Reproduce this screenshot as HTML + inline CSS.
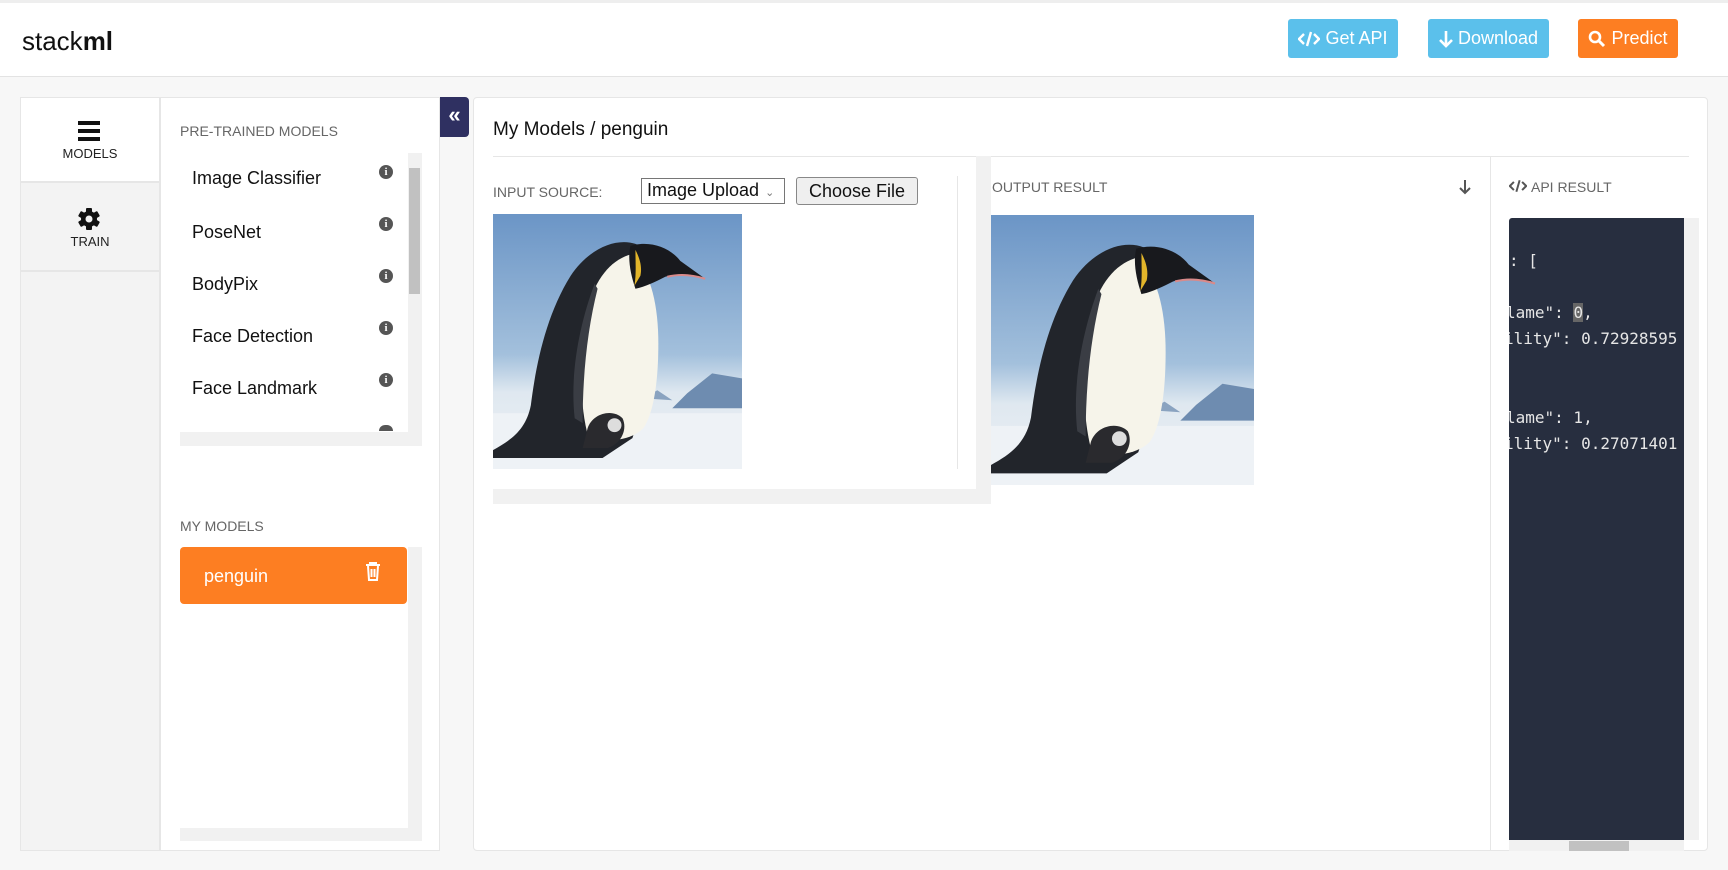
<!DOCTYPE html>
<html><head><meta charset="utf-8"><style>
*{box-sizing:border-box;margin:0;padding:0}
body{width:1728px;height:870px;background:#f7f7f7;font-family:"Liberation Sans",Arial,sans-serif;position:relative;overflow:hidden;color:#222}
.a{position:absolute}
.hdr{left:0;top:0;width:1728px;height:77px;background:#fff;border-top:3px solid #eee;border-bottom:1px solid #e3e3e3}
.btn{height:39px;top:19px;border-radius:3px;color:#fff;font-size:18px;display:flex;align-items:center;justify-content:center;gap:5px}
.lbl{font-size:14px;color:#666}
.item{left:192px;font-size:18px;color:#111}
.info{left:379px;width:14px;height:14px;border-radius:50%;background:#555;color:#fff;font-size:11px;font-weight:bold;text-align:center;line-height:14px;font-family:"Liberation Serif",serif}
.sb{background:#f1f1f1}
.code{font-family:"DejaVu Sans Mono","Liberation Mono",monospace;font-size:16px;color:#e6e6e6;white-space:pre}
</style></head><body>
<div class="a hdr"></div>
<div class="a" style="left:22px;top:26px;font-size:26px;color:#111">stack<b>ml</b></div>
<div class="a btn" style="left:1288px;width:110px;background:#5bc0eb">
<svg width="22" height="16" viewBox="0 0 22 16"><path d="M6 3L1 8l5 5M16 3l5 5-5 5M13 1L9 15" stroke="#fff" stroke-width="2.4" fill="none"/></svg>Get API</div>
<div class="a btn" style="left:1428px;width:121px;background:#5bc0eb">
<svg width="14" height="18" viewBox="0 0 14 18"><path d="M7 1v15M1 10l6 6 6-6" stroke="#fff" stroke-width="2.6" fill="none"/></svg>Download</div>
<div class="a btn" style="left:1578px;width:100px;background:#fd7e22">
<svg width="18" height="18" viewBox="0 0 18 18"><circle cx="7" cy="7" r="5" stroke="#fff" stroke-width="2.6" fill="none"/><path d="M11 11l5 5" stroke="#fff" stroke-width="3"/></svg>Predict</div>

<div class="a" style="left:20px;top:97px;width:140px;height:754px;background:#f3f3f3;border:1px solid #e6e6e6"></div>
<div class="a" style="left:20px;top:97px;width:140px;height:86px;background:#fff;border:1px solid #e6e6e6;border-bottom:2px solid #e6e6e6"></div>
<div class="a" style="left:20px;top:183px;width:140px;height:89px;border-bottom:2px solid #e6e6e6"></div>
<svg class="a" style="left:78px;top:121px" width="22" height="20" viewBox="0 0 22 20"><rect y="0" width="22" height="4" fill="#111"/><rect y="8" width="22" height="4" fill="#111"/><rect y="16" width="22" height="4" fill="#111"/></svg>
<div class="a" style="left:20px;top:146px;width:140px;text-align:center;font-size:13px">MODELS</div>
<svg class="a" style="left:77px;top:207px" width="24" height="24" viewBox="0 0 24 24"><g fill="#111"><circle cx="12" cy="12" r="8"/><rect x="9" y="1" width="6" height="22" rx="1"/><rect x="9" y="1" width="6" height="22" rx="1" transform="rotate(60 12 12)"/><rect x="9" y="1" width="6" height="22" rx="1" transform="rotate(120 12 12)"/></g><circle cx="12" cy="12" r="3.5" fill="#f3f3f3"/></svg>
<div class="a" style="left:20px;top:234px;width:140px;text-align:center;font-size:13px">TRAIN</div>

<div class="a" style="left:160px;top:97px;width:280px;height:754px;background:#fff;border:1px solid #e6e6e6"></div>
<div class="a lbl" style="left:180px;top:123px">PRE-TRAINED MODELS</div>
<div class="a item" style="top:168px">Image Classifier</div><div class="a info" style="top:165px">i</div>
<div class="a item" style="top:222px">PoseNet</div><div class="a info" style="top:217px">i</div>
<div class="a item" style="top:274px">BodyPix</div><div class="a info" style="top:269px">i</div>
<div class="a item" style="top:326px">Face Detection</div><div class="a info" style="top:321px">i</div>
<div class="a item" style="top:378px">Face Landmark</div><div class="a info" style="top:373px">i</div>
<div class="a info" style="top:425px;height:6px;border-radius:7px 7px 0 0"></div>
<div class="a sb" style="left:408px;top:153px;width:14px;height:293px"></div>
<div class="a" style="left:409px;top:168px;width:11px;height:126px;background:#c1c1c1"></div>
<div class="a sb" style="left:180px;top:432px;width:228px;height:14px"></div>
<div class="a lbl" style="left:180px;top:518px">MY MODELS</div>
<div class="a" style="left:180px;top:547px;width:227px;height:57px;background:#fd7e22;border-radius:4px"></div>
<div class="a" style="left:204px;top:566px;font-size:18px;color:#fff">penguin</div>
<svg class="a" style="left:365px;top:562px" width="16" height="19" viewBox="0 0 16 19"><path d="M1 3h14M5 3V1h6v2M3 4l1 14h8l1-14M6.5 7v8M9.5 7v8" stroke="#fff" stroke-width="2" fill="none"/></svg>
<div class="a sb" style="left:408px;top:547px;width:14px;height:294px"></div>
<div class="a sb" style="left:180px;top:828px;width:228px;height:13px"></div>

<div class="a" style="left:440px;top:97px;width:29px;height:40px;background:#2f3061;border-radius:0 4px 4px 0;color:#fff;font-size:22px;font-weight:bold;text-align:center;line-height:36px">«</div>

<div class="a" style="left:473px;top:97px;width:1235px;height:754px;background:#fff;border:1px solid #e6e6e6;border-radius:4px"></div>
<div class="a" style="left:493px;top:119px;font-size:19px;color:#111">My Models / penguin</div>
<div class="a" style="left:493px;top:156px;width:1196px;height:1px;background:#e6e6e6"></div>
<div class="a lbl" style="left:493px;top:184px">INPUT SOURCE:</div>
<div class="a" style="left:641px;top:178px;width:144px;height:26px;border:1px solid #767676;font-size:18px;padding:1px 5px;color:#111">Image Upload<span style="font-size:11px;color:#777;margin-left:6px">⌄</span></div>
<div class="a" style="left:796px;top:177px;width:122px;height:28px;border:1px solid #888;border-radius:3px;background:#efefef;font-size:18px;text-align:center;line-height:26px;color:#111">Choose File</div>
<div class="a" style="left:957px;top:176px;width:1px;height:293px;background:#e6e6e6"></div>
<div class="a sb" style="left:976px;top:156px;width:15px;height:348px"></div>
<div class="a sb" style="left:493px;top:489px;width:483px;height:15px"></div>

<svg width="0" height="0" style="position:absolute"><defs>
<linearGradient id="sky" x1="0" y1="0" x2="0" y2="1"><stop offset="0" stop-color="#6b95c6"/><stop offset=".55" stop-color="#a3c0dc"/><stop offset=".7" stop-color="#dfe8f0"/><stop offset="1" stop-color="#eef1f5"/></linearGradient>
<g id="peng">
<rect width="250" height="256" fill="url(#sky)"/>
<path d="M195 180l25-20 30 5v30H180z" fill="#6e8cb0"/>
<path d="M150 185l15-8 15 10z" fill="#8aa3c0"/>
<rect y="200" width="250" height="56" fill="#eef2f6"/>
<path d="M148 32c-20-10-50 0-70 30-25 40-35 90-40 130-5 25-20 35-38 45v8h110l30-20c10-30 20-80 15-130z" fill="#22252b"/>
<path d="M140 40c18 18 26 50 26 90 0 40-5 70-15 85-12 12-35 15-55 10-10-35-10-90 0-135 10-30 25-45 44-50z" fill="#f6f4ea"/>
<path d="M102 70c-15 40-25 90-20 135l8 5c0-50 5-95 15-135z" fill="#3a3d44"/>
<path d="M138 32c20-6 40 2 50 15l25 18c-15-6-30-5-40-2-10 5-20 10-30 12-5-15-8-30-5-43z" fill="#18191d"/>
<path d="M143 36c4 8 7 16 5 26l-6 10c2-12 1-24 1-36z" fill="#e2b52a"/>
<path d="M175 63c12-3 25-2 38 2" stroke="#d98a8a" stroke-width="2" fill="none"/>
<path d="M95 215c5-15 25-20 35-10 5 10 0 25-15 30h-25z" fill="#2a2a2e"/>
<circle cx="122" cy="212" r="7" fill="#ddd"/>
</g></defs></svg>
<svg class="a" style="left:493px;top:214px" width="249" height="255" viewBox="0 0 250 256" preserveAspectRatio="none"><use href="#peng"/></svg>

<div class="a lbl" style="left:992px;top:179px">OUTPUT RESULT</div>
<svg class="a" style="left:1458px;top:179px" width="14" height="16" viewBox="0 0 14 16"><path d="M7 1v13M2 9l5 5 5-5" stroke="#555" stroke-width="2" fill="none"/></svg>
<svg class="a" style="left:991px;top:215px" width="263" height="270" viewBox="0 0 250 256" preserveAspectRatio="none"><use href="#peng"/></svg>
<div class="a" style="left:1490px;top:157px;width:1px;height:694px;background:#e6e6e6"></div>
<svg class="a" style="left:1509px;top:179px" width="18" height="14" viewBox="0 0 22 16"><path d="M6 3L1 8l5 5M16 3l5 5-5 5M13 1L9 15" stroke="#555" stroke-width="2.4" fill="none"/></svg>
<div class="a lbl" style="left:1531px;top:179px">API RESULT</div>
<div class="a" style="left:1509px;top:218px;width:175px;height:622px;background:#272e3f;border-radius:3px 0 0 0;overflow:hidden">
<div class="a code" style="left:0;top:33px">: [</div>
<div class="a code" style="left:-3px;top:85px">lame": <span style="background:#666">0</span>,</div>
<div class="a code" style="left:-5px;top:111px">ility": 0.72928595</div>
<div class="a code" style="left:-3px;top:190px">lame": 1,</div>
<div class="a code" style="left:-5px;top:216px">ility": 0.27071401</div>
</div>
<div class="a sb" style="left:1684px;top:218px;width:15px;height:622px"></div>
<div class="a sb" style="left:1509px;top:840px;width:175px;height:11px"></div>
<div class="a" style="left:1569px;top:841px;width:60px;height:10px;background:#c1c1c1"></div>
</body></html>
